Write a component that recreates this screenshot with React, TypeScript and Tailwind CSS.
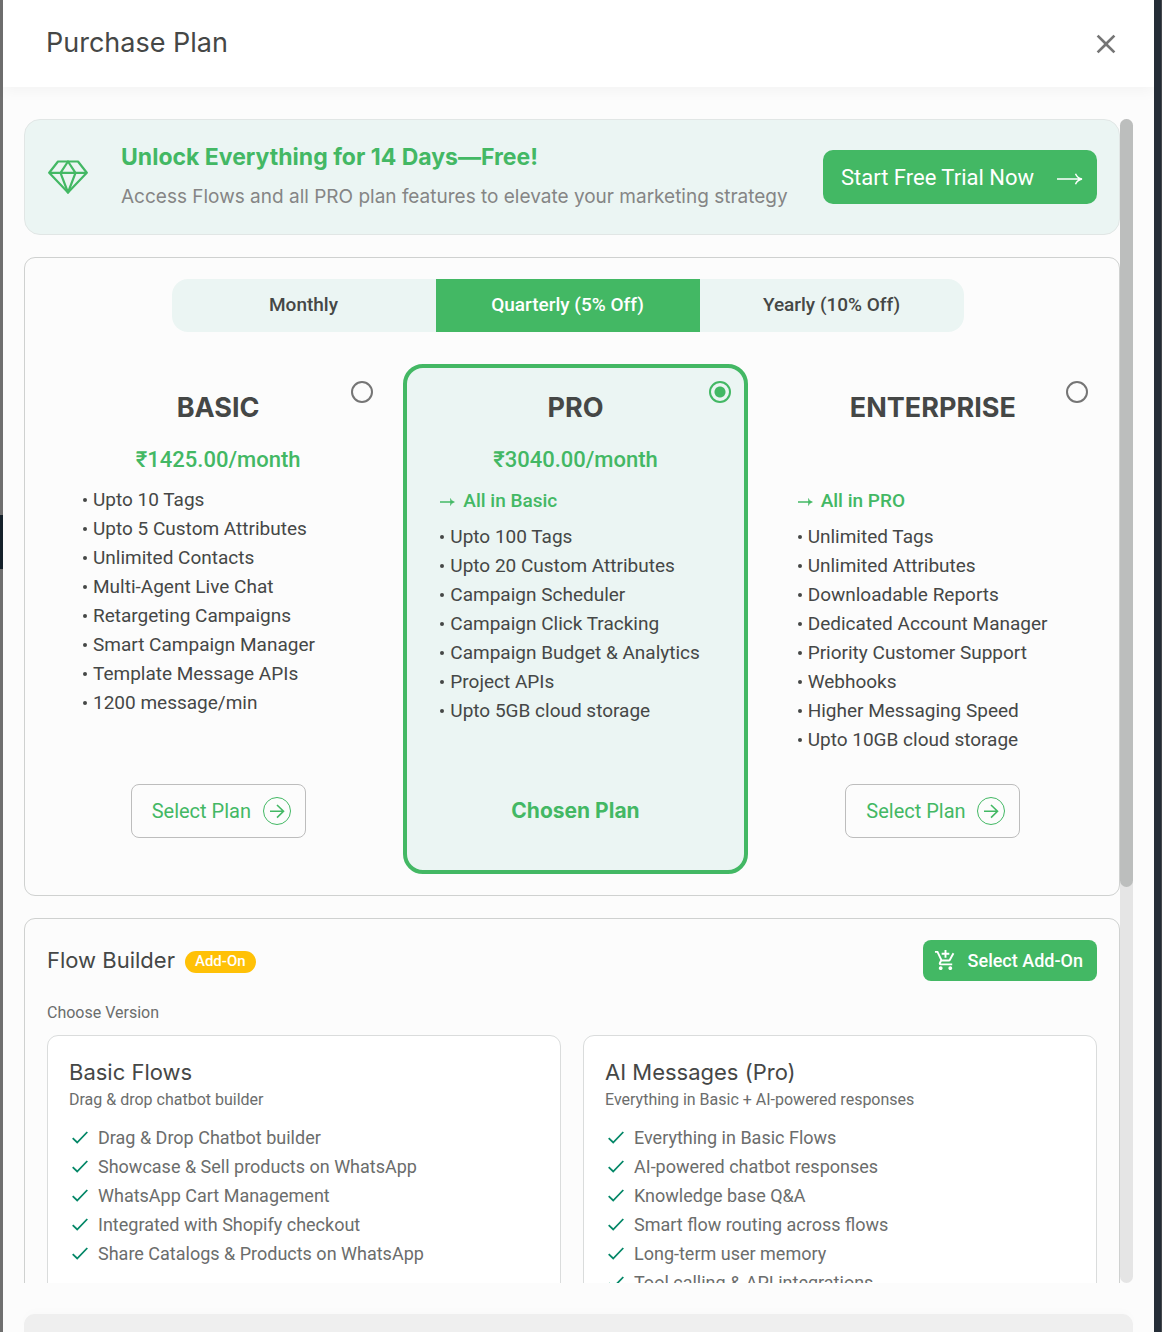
import { useState } from "react";
import { MdClose, MdOutlineAddShoppingCart } from "react-icons/md";

type Plan = {
    id: string;
    name: string;
    price?: string;
    includes?: string;
    features: string[];
};

type Version = {
    name: string;
    description: string;
    features: string[];
};

const periods = ["Monthly", "Quarterly (5% Off)", "Yearly (10% Off)"];

const plans: Plan[] = [
    {
        id: "basic",
        name: "BASIC",
        price: "₹1425.00/month",
        features: [
            "Upto 10 Tags",
            "Upto 5 Custom Attributes",
            "Unlimited Contacts",
            "Multi-Agent Live Chat",
            "Retargeting Campaigns",
            "Smart Campaign Manager",
            "Template Message APIs",
            "1200 message/min",
        ],
    },
    {
        id: "pro",
        name: "PRO",
        price: "₹3040.00/month",
        includes: "All in Basic",
        features: [
            "Upto 100 Tags",
            "Upto 20 Custom Attributes",
            "Campaign Scheduler",
            "Campaign Click Tracking",
            "Campaign Budget & Analytics",
            "Project APIs",
            "Upto 5GB cloud storage",
        ],
    },
    {
        id: "enterprise",
        name: "ENTERPRISE",
        includes: "All in PRO",
        features: [
            "Unlimited Tags",
            "Unlimited Attributes",
            "Downloadable Reports",
            "Dedicated Account Manager",
            "Priority Customer Support",
            "Webhooks",
            "Higher Messaging Speed",
            "Upto 10GB cloud storage",
        ],
    },
];

const versions: Version[] = [
    {
        name: "Basic Flows",
        description: "Drag & drop chatbot builder",
        features: [
            "Drag & Drop Chatbot builder",
            "Showcase & Sell products on WhatsApp",
            "WhatsApp Cart Management",
            "Integrated with Shopify checkout",
            "Share Catalogs & Products on WhatsApp",
        ],
    },
    {
        name: "AI Messages (Pro)",
        description: "Everything in Basic + AI-powered responses",
        features: [
            "Everything in Basic Flows",
            "AI-powered chatbot responses",
            "Knowledge base Q&A",
            "Smart flow routing across flows",
            "Long-term user memory",
            "Tool calling & API integrations",
        ],
    },
];

const DiamondIcon = () => (
    <svg
        viewBox="0 0 40 34"
        className="h-[34px] w-10 shrink-0"
        fill="none"
        stroke="#43b864"
        strokeWidth="2.200"
        strokeLinejoin="round"
    >
        <path d="M10 1.500h20L38.800 12.800 20 32.500 1.200 12.800z" />
        <path d="M1.200 12.800h37.600M20 1.500l-7.500 11.300L20 32.500l7.500-19.700z" />
    </svg>
);

const CheckIcon = () => (
    <svg
        viewBox="0 0 16 13"
        className="h-[13px] w-4 shrink-0"
        fill="none"
        stroke="#048767"
        strokeWidth="1.800"
    >
        <path d="M.7 7.200l4.500 4.300L15.300 1" />
    </svg>
);

const PlanCard = ({
    plan,
    chosen,
    onSelect,
}: {
    plan: Plan;
    chosen: boolean;
    onSelect: () => void;
}) => (
    <section
        className={`relative flex h-[510px] flex-col rounded-[20px] border-4 px-[33px] pt-5 pb-8 ${
            chosen
                ? "border-[#43b864] bg-[#ebf5f3]"
                : "border-transparent bg-transparent"
        }`}
    >
        <input
            type="radio"
            name="plan"
            aria-label={plan.name}
            checked={chosen}
            onChange={onSelect}
            className="absolute top-[13px] right-[13px] size-[22px] appearance-none rounded-full border-2 border-[#757575] checked:border-[#43b864] checked:bg-[radial-gradient(circle,#43b864_5px,transparent_6px)]"
        />
        <h2 className="text-center font-[Inter] text-[27px] leading-10 font-bold">
            {plan.name}
        </h2>
        <p className="mt-3 mb-[3px] h-10 text-center text-[22px] leading-10 font-medium text-[#43b864]">
            {plan.price}
        </p>
        {plan.includes && (
            <p className="flex h-[37px] items-center gap-2 text-[19px] font-medium text-[#43b864]">
                <svg
                    viewBox="0 0 15 8"
                    className="h-2 w-[15px]"
                    fill="none"
                    stroke="currentColor"
                    strokeWidth="1.500"
                >
                    <path d="M0 4h13.500" />
                    <path
                        d="M10.500.5c.7 1.700 1.900 2.900 4 3.500-2.100.6-3.300 1.800-4 3.500z"
                        fill="currentColor"
                        strokeWidth=".5"
                    />
                </svg>
                {plan.includes}
            </p>
        )}
        <ul className="pt-0.5 text-[19px] leading-[29px] whitespace-nowrap">
            {plan.features.map((feature) => (
                <li key={feature} className="flex items-center gap-1.5">
                    <span className="size-1 rounded-full bg-[#454746]" />
                    {feature}
                </li>
            ))}
        </ul>
        {chosen ? (
            <p className="mt-auto text-center font-[Inter] text-[21px] leading-[54px] font-bold text-[#43b864]">
                Chosen Plan
            </p>
        ) : (
            <button
                type="button"
                onClick={onSelect}
                className="mt-auto flex h-[54px] w-[175px] items-center justify-between self-center rounded-lg border border-[#bdbdbd] pr-3.5 pl-5 text-xl text-[#43b864]"
            >
                Select Plan
                <svg
                    viewBox="0 0 28 28"
                    className="size-7"
                    fill="none"
                    stroke="currentColor"
                >
                    <circle cx="14" cy="14" r="13.500" />
                    <path
                        d="M7 14.300h13.500M14 8l6.500 6.300-6.500 6.300"
                        strokeWidth="1.600"
                    />
                </svg>
            </button>
        )}
    </section>
);

const VersionCard = ({ version }: { version: Version }) => (
    <section className="rounded-[11px] border border-[#dadcdc] bg-white px-[21px] py-5">
        <h3 className="font-[Inter] text-[22px] leading-8">{version.name}</h3>
        <p className="text-base leading-6 text-[#6b6d6c]">
            {version.description}
        </p>
        <ul className="mt-[11px] text-lg leading-[29px] text-[#6b6d6c]">
            {version.features.map((feature) => (
                <li key={feature} className="flex items-center gap-2.5 pl-[3px]">
                    <CheckIcon />
                    {feature}
                </li>
            ))}
        </ul>
    </section>
);

const App = () => {
    const [period, setPeriod] = useState(periods[1]);
    const [chosenPlan, setChosenPlan] = useState("pro");

    return (
        <div className="flex h-screen overflow-hidden bg-[#6f6f6f] font-[Roboto,sans-serif] text-[#454746]">
            {/* dimmed page behind the dialog */}
            <div className="flex w-[3px] shrink-0 flex-col">
                <div className="h-[515px]" />
                <div className="h-[54px] bg-[#15212a]" />
            </div>

            <main
                role="dialog"
                aria-labelledby="dialog-title"
                className="flex min-w-0 flex-1 flex-col bg-[#fcfcfc]"
            >
                <header className="flex h-[87px] shrink-0 items-center justify-between bg-white pr-8 pl-[43px] shadow-[0_4px_14px_rgba(0,0,0,0.04)]">
                    <h1 id="dialog-title" className="font-[Inter] text-[27px]">
                        Purchase Plan
                    </h1>
                    <button type="button" aria-label="Close">
                        <MdClose className="size-8 text-[#757575]" />
                    </button>
                </header>

                <div className="mt-8 flex min-h-0 flex-1 px-[21px]">
                    <div className="flex min-w-0 flex-1 flex-col gap-[22px] overflow-y-auto [scrollbar-width:none]">
                        <section className="flex h-[116px] shrink-0 items-center rounded-2xl border border-[#e1e6e5] bg-[#ebf5f3] pr-[22px] pl-[23px]">
                            <DiamondIcon />
                            <div className="ml-[33px] flex-1 whitespace-nowrap">
                                <h2 className="font-[Inter] text-[23px] leading-10 font-bold text-[#43b864]">
                                    Unlock Everything for 14 Days—Free!
                                </h2>
                                <p className="font-[Inter] text-[19px] leading-10 text-[#858585]">
                                    Access Flows and all PRO plan features to
                                    elevate your marketing strategy
                                </p>
                            </div>
                            <button
                                type="button"
                                className="flex h-[54px] w-[274px] shrink-0 items-center justify-between rounded-[10px] bg-[#43b864] pr-3.5 pl-[18px] text-[22px] text-white"
                            >
                                Start Free Trial Now
                                <svg
                                    viewBox="0 0 26 12"
                                    className="mt-1 h-3 w-[26px]"
                                    fill="none"
                                    stroke="currentColor"
                                    strokeWidth="1.400"
                                >
                                    <path d="M0 6h24.500M18.500.7c1.200 3 3 4.600 6.500 5.300-3.500.7-5.300 2.300-6.500 5.300" />
                                </svg>
                            </button>
                        </section>

                        <section className="shrink-0 rounded-[11px] border border-[#cfd1d0] pt-[21px] pr-[14px] pb-[21px] pl-[21px]">
                            <div className="flex justify-center pr-4">
                                <div className="grid h-[53px] w-[792px] grid-cols-3 overflow-hidden rounded-2xl bg-[#ebf5f3] text-[19px] font-medium">
                                    {periods.map((p) => (
                                        <button
                                            key={p}
                                            type="button"
                                            aria-pressed={p === period}
                                            onClick={() => setPeriod(p)}
                                            className={
                                                p === period
                                                    ? "bg-[#43b864] text-white"
                                                    : ""
                                            }
                                        >
                                            {p}
                                        </button>
                                    ))}
                                </div>
                            </div>
                            <div className="mt-8 grid grid-cols-3 gap-[13px]">
                                {plans.map((plan) => (
                                    <PlanCard
                                        key={plan.id}
                                        plan={plan}
                                        chosen={plan.id === chosenPlan}
                                        onSelect={() => setChosenPlan(plan.id)}
                                    />
                                ))}
                            </div>
                        </section>

                        <section className="shrink-0 rounded-t-[11px] border border-[#cfd1d0] px-[22px] py-[21px]">
                            <div className="flex items-center">
                                <h2 className="font-[Inter] text-[22px]">
                                    Flow Builder
                                </h2>
                                <span className="mt-0.5 ml-2.5 flex h-[22px] items-center rounded-full bg-[#ffc107] px-2.5 text-[15px] font-medium text-white">
                                    Add-On
                                </span>
                                <button
                                    type="button"
                                    className="ml-auto flex h-[41px] w-[174px] items-center justify-between rounded-lg bg-[#43b864] pr-3.5 pl-[11px] text-lg font-medium text-white"
                                >
                                    <MdOutlineAddShoppingCart className="size-[23px]" />
                                    Select Add-On
                                </button>
                            </div>
                            <p className="mt-5 text-base leading-6 text-[#6b6d6c]">
                                Choose Version
                            </p>
                            <div className="mt-2.5 grid grid-cols-2 gap-[22px]">
                                {versions.map((version) => (
                                    <VersionCard
                                        key={version.name}
                                        version={version}
                                    />
                                ))}
                            </div>
                        </section>
                    </div>

                    {/* scrollbar */}
                    <div className="w-[13px] shrink-0 rounded-full bg-[#e5e5e5]">
                        <div className="h-[66%] rounded-full bg-[#bcbebd]" />
                    </div>
                </div>

                <footer className="mx-[21px] mt-[31px] h-[18px] shrink-0 rounded-t-[11px] bg-[#efefef] shadow-[0_-4px_8px_rgba(0,0,0,0.01)]" />
            </main>

            <div className="w-2 shrink-0 border-r border-[#44474c] bg-[#252d37]" />
        </div>
    );
};

export default App;
